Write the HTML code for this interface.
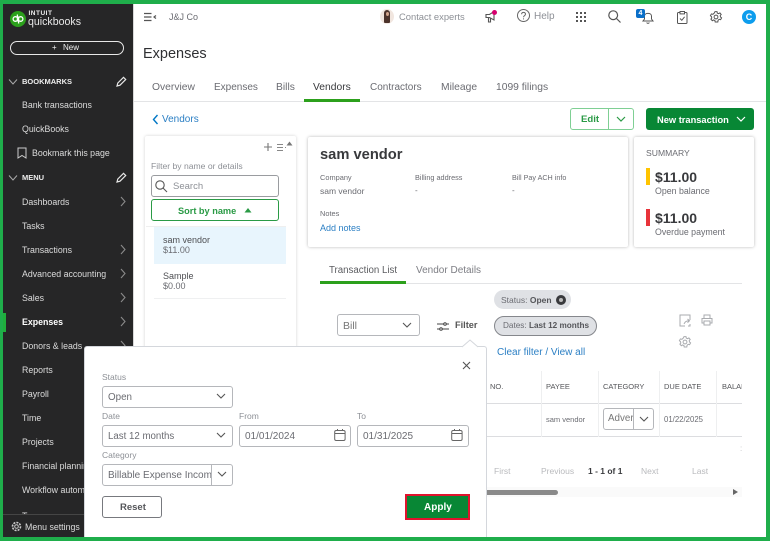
<!DOCTYPE html>
<html><head><meta charset="utf-8">
<style>
html,body{margin:0;padding:0;background:#fff}
#r{position:relative;width:770px;height:541px;overflow:hidden;background:#fff;font-family:"Liberation Sans",sans-serif;color:#6b6c72;filter:blur(.3px)}
#r *{box-sizing:border-box}
.t{position:absolute;white-space:nowrap;line-height:14px;font-size:9px}
.b{position:absolute}
.s{color:#dcdcdc;font-size:8.8px;left:22px}
.g{color:#8d9096}
.f{position:absolute;border:1px solid #b5b7bb;border-radius:3px;background:#fff}
svg{position:absolute;overflow:visible}
</style></head><body><div id="r">

<!-- sidebar -->
<div class="b" style="left:3px;top:3px;width:130px;height:534px;background:#262627"></div>
<div class="b" style="left:133px;top:3px;width:1px;height:534px;background:#d8d8d8"></div>
<div class="b" style="left:3px;top:313px;width:3px;height:19px;background:#1fae3c"></div>
<div class="b" style="left:3px;top:514px;width:130px;height:1px;background:#454545"></div>

<div class="b" style="left:10px;top:11px;width:16px;height:16px;border-radius:50%;background:#2ca01c"></div>
<svg style="left:10px;top:11px" width="16" height="16" fill="none" stroke="#fff" stroke-width="1.3"><circle cx="5.4" cy="8" r="2.3"/><circle cx="10.6" cy="8" r="2.3"/><path d="M7.4 3.5V10.5M8.6 5.5V12.5"/></svg>
<div class="t" style="left:28.5px;top:6.5px;color:#f0f0f0;font-size:6.5px;font-weight:bold;letter-spacing:.5px">INTUIT</div>
<div class="t" style="left:28px;top:15px;color:#e8e8e8;font-size:10.6px">quickbooks</div>

<div class="b" style="left:10px;top:41px;width:114px;height:14px;border:1.5px solid #e8e8e8;border-radius:8px"></div>
<div class="t" style="left:52px;top:41px;color:#eee;font-size:8px">+</div>
<div class="t" style="left:63px;top:41px;color:#eee;font-size:8px">New</div>

<svg style="left:8px;top:78px" width="10" height="8" fill="none" stroke="#aaa" stroke-width="1"><path d="M1 1.5L5 6L9 1.5"/></svg>
<div class="t" style="left:22px;top:75px;color:#eee;font-size:7.5px;font-weight:bold">BOOKMARKS</div>
<svg style="left:115px;top:76px" width="12" height="12" fill="none" stroke="#e8e8e8" stroke-width="1.2"><path d="M2 10L2.8 7L8.5 1.3L10.7 3.5L5 9.2Z"/></svg>
<div class="t s" style="top:98px">Bank transactions</div>
<div class="t s" style="top:122px">QuickBooks</div>
<svg style="left:17px;top:147px" width="10" height="12" fill="none" stroke="#ccc" stroke-width="1"><path d="M1 1H9V11L5 8.5L1 11Z"/></svg>
<div class="t s" style="left:32px;top:146px">Bookmark this page</div>

<svg style="left:8px;top:174px" width="10" height="8" fill="none" stroke="#aaa" stroke-width="1"><path d="M1 1.5L5 6L9 1.5"/></svg>
<div class="t" style="left:22px;top:171px;color:#eee;font-size:7.5px;font-weight:bold">MENU</div>
<svg style="left:115px;top:172px" width="12" height="12" fill="none" stroke="#e8e8e8" stroke-width="1.2"><path d="M2 10L2.8 7L8.5 1.3L10.7 3.5L5 9.2Z"/></svg>

<div class="t s" style="top:195px">Dashboards</div>
<div class="t s" style="top:219px">Tasks</div>
<div class="t s" style="top:243px">Transactions</div>
<div class="t s" style="top:267px">Advanced accounting</div>
<div class="t s" style="top:291px">Sales</div>
<div class="t s" style="top:315px;font-weight:bold;color:#fff">Expenses</div>
<div class="t s" style="top:339px">Donors &amp; leads</div>
<div class="t s" style="top:363px">Reports</div>
<div class="t s" style="top:387px">Payroll</div>
<div class="t s" style="top:411px">Time</div>
<div class="t s" style="top:435px">Projects</div>
<div class="t s" style="top:459px">Financial planning</div>
<div class="t s" style="top:483px">Workflow automation</div>
<div class="b" style="left:22px;top:509px;width:20px;height:5px;overflow:hidden"><div class="t" style="left:0;top:0;color:#dcdcdc;font-size:8.8px">Taxes</div></div>
<svg style="left:120px;top:196px" width="6" height="150" fill="none" stroke="#8a8a8a" stroke-width="1.1"><path d="M1 1L5 5.5L1 10M1 49L5 53.5L1 58M1 73L5 77.5L1 82M1 97L5 101.5L1 106M1 121L5 125.5L1 130M1 145L5 149.5L1 154"/></svg>

<svg style="left:11px;top:521px" width="11" height="11" fill="none" stroke="#ccc" stroke-width="1"><circle cx="5.5" cy="5.5" r="1.8"/><circle cx="5.5" cy="5.5" r="4" stroke-dasharray="2 1.1" stroke-width="1.6"/></svg>
<div class="t s" style="left:25px;top:520px;color:#ddd">Menu settings</div>

<!-- top bar -->
<svg style="left:144px;top:12px" width="13" height="10" fill="none" stroke="#555" stroke-width="1.2"><path d="M0 1.5H7.5M0 5H7.5M0 8.5H7.5"/><path d="M12 3.5L10 5L12 6.5" stroke-width="1.2"/></svg>
<div class="t" style="left:169px;top:10px;font-size:9px;color:#6b6c72">J&amp;J Co</div>

<div class="b" style="left:380px;top:9px;width:14px;height:15px;border-radius:50%;background:#f1e6df"></div>
<div class="b" style="left:384px;top:10px;width:6px;height:13px;border-radius:3px 3px 1px 1px;background:#4c332b"></div>
<div class="b" style="left:385.5px;top:12px;width:3px;height:4px;border-radius:50%;background:#d3a58d"></div>
<div class="t" style="left:399px;top:10px;font-size:9.4px;color:#8d9096">Contact experts</div>

<svg style="left:485px;top:10px" width="14" height="14" fill="none" stroke="#555" stroke-width="1.1"><path d="M1 4.5H4.5L9 1.5V10L4.5 7.5H1Z"/><path d="M3.5 8V12H5.5V8.5"/></svg>
<div class="b" style="left:492px;top:10px;width:5px;height:5px;border-radius:50%;background:#d6006e"></div>

<svg style="left:517px;top:9px" width="14" height="14" fill="none" stroke="#666" stroke-width="1"><circle cx="6.5" cy="6.5" r="6"/><path d="M4.6 5.2C4.6 2.8 8.5 2.8 8.5 5.1C8.5 6.6 6.5 6.6 6.5 8.2"/><path d="M6.5 9.4V10.4"/></svg>
<div class="t" style="left:534px;top:9.5px;font-size:10px;color:#8d9096">Help</div>

<svg style="left:576px;top:12px" width="10" height="10" fill="#555"><rect x="0" y="0" width="2" height="2"/><rect x="4" y="0" width="2" height="2"/><rect x="8" y="0" width="2" height="2"/><rect x="0" y="4" width="2" height="2"/><rect x="4" y="4" width="2" height="2"/><rect x="8" y="4" width="2" height="2"/><rect x="0" y="8" width="2" height="2"/><rect x="4" y="8" width="2" height="2"/><rect x="8" y="8" width="2" height="2"/></svg>

<svg style="left:608px;top:10px" width="14" height="14" fill="none" stroke="#555" stroke-width="1.2"><circle cx="5.2" cy="5.2" r="4.4"/><path d="M8.5 8.5L12.5 12.5"/></svg>

<svg style="left:642px;top:11px" width="12" height="13" fill="none" stroke="#555" stroke-width="1"><path d="M1 10H11L9.5 8V5C9.5 1.5 2.5 1.5 2.5 5V8Z"/><path d="M4.7 11.5C5 12.6 7 12.6 7.3 11.5"/></svg>
<div class="b" style="left:636px;top:9px;width:9px;height:9px;border-radius:2px;background:#0a6fc9;color:#fff;font-size:7px;line-height:9px;text-align:center;font-weight:bold">4</div>

<svg style="left:677px;top:11px" width="11" height="13" fill="none" stroke="#555" stroke-width="1"><rect x=".5" y="1.5" width="9.5" height="11" rx="1"/><rect x="3" y=".5" width="4.5" height="2.4" fill="#fff"/><path d="M3 7.5L4.8 9.3L7.6 5.8"/></svg>

<svg style="left:710px;top:11px" width="12" height="12" fill="none" stroke="#555" stroke-width="1"><circle cx="6" cy="6" r="1.9"/><path d="M5 .6H7L7.3 2.1L8.6 2.7L9.9 1.9L11.2 3.5L10.2 4.6L10.5 6L11.6 6.9L10.6 8.7L9.2 8.3L8.1 9.3L7.8 11H5.2L4.9 9.5L3.6 8.9L2.3 9.7L.9 8.1L1.8 7L1.5 5.6L.4 4.7L1.4 2.9L2.9 3.3L4.1 2.3Z"/></svg>

<div class="b" style="left:742px;top:10px;width:14px;height:14px;border-radius:50%;background:#0d9ded;color:#fff;font-size:9px;font-weight:bold;line-height:14px;text-align:center">C</div>

<!-- heading & tabs -->
<div class="t" style="left:143px;top:45px;font-size:14.5px;line-height:18px;color:#2f3033">Expenses</div>
<div class="t" style="left:152px;top:80.5px;font-size:10.3px;color:#6b6c72">Overview</div>
<div class="t" style="left:214px;top:80.5px;font-size:10px;color:#6b6c72">Expenses</div>
<div class="t" style="left:276px;top:80.5px;font-size:10.3px;color:#6b6c72">Bills</div>
<div class="t" style="left:313px;top:80.5px;font-size:10.3px;color:#393a3d">Vendors</div>
<div class="t" style="left:370px;top:80.5px;font-size:10px;color:#6b6c72">Contractors</div>
<div class="t" style="left:441px;top:80.5px;font-size:10.3px;color:#6b6c72">Mileage</div>
<div class="t" style="left:496px;top:80.5px;font-size:10.3px;color:#6b6c72">1099 filings</div>
<div class="b" style="left:134px;top:101px;width:632px;height:1px;background:#e3e4e6"></div>
<div class="b" style="left:304px;top:99px;width:56px;height:3px;background:#2ca01c"></div>

<svg style="left:152px;top:114px" width="7" height="11" fill="none" stroke="#0077c5" stroke-width="1.4"><path d="M5.5 1L1.5 5.5L5.5 10"/></svg>
<div class="t" style="left:162px;top:112.5px;font-size:10px;color:#2b7fc4">Vendors</div>

<div class="b" style="left:570px;top:108px;width:64px;height:22px;border:1px solid #7fcf94;border-radius:3px"></div>
<div class="b" style="left:608px;top:108px;width:1px;height:22px;background:#7fcf94"></div>
<div class="t" style="left:581px;top:113px;font-size:9.6px;font-weight:bold;color:#2a9a45">Edit</div>
<svg style="left:616px;top:116px" width="10" height="7" fill="none" stroke="#2a9a45" stroke-width="1.2"><path d="M1 1L5 5L9 1"/></svg>
<div class="b" style="left:646px;top:108px;width:108px;height:22px;border-radius:3px;background:#088735"></div>
<div class="t" style="left:657px;top:113px;font-size:9.3px;font-weight:bold;color:#fff">New transaction</div>
<svg style="left:736px;top:116px" width="10" height="7" fill="none" stroke="#fff" stroke-width="1.2"><path d="M1 1L5 5L9 1"/></svg>

<!-- vendor list card -->
<div class="b" style="left:145px;top:136px;width:151px;height:230px;background:#fff;border-radius:2px;box-shadow:0 0 3px rgba(0,0,0,.18)"></div>
<div class="b" style="left:146px;top:226px;width:140px;height:1px;background:#efefef"></div>
<svg style="left:264px;top:143px" width="8" height="8" fill="none" stroke="#777" stroke-width="1.1"><path d="M4 0V8M0 4H8"/></svg>
<svg style="left:277px;top:144px" width="9" height="7" fill="none" stroke="#888" stroke-width="1"><path d="M0 .5H6M0 3.5H6M0 6.5H6M8 3.5H9"/></svg>
<svg style="left:286px;top:141px" width="7" height="5" fill="#777"><path d="M3.5 .5L6.5 4.5H.5Z"/></svg>
<div class="t" style="left:151px;top:159px;font-size:8.6px;color:#8d9096">Filter by name or details</div>
<div class="f" style="left:151px;top:175px;width:128px;height:22px;border-color:#9a9ca0"></div>
<svg style="left:155px;top:180px" width="13" height="13" fill="none" stroke="#555" stroke-width="1.1"><circle cx="5" cy="5" r="4.2"/><path d="M8 8L12 12"/></svg>
<div class="t" style="left:173px;top:179.5px;font-size:9.5px;color:#8d9096">Search</div>
<div class="b" style="left:151px;top:199px;width:128px;height:22px;border:1.5px solid #2a9a45;border-radius:3px"></div>
<div class="t" style="left:178px;top:203.5px;font-size:9.2px;font-weight:bold;color:#2a9a45">Sort by name</div>
<svg style="left:244px;top:208px" width="8" height="5" fill="#2a9a45"><path d="M4 0L7.5 4.5H.5Z"/></svg>

<div class="b" style="left:154px;top:227px;width:132px;height:37px;background:#e8f5fd"></div>
<div class="t" style="left:163px;top:233px;font-size:9px;color:#4d4e52">sam vendor</div>
<div class="t" style="left:163px;top:243px;font-size:9px;color:#6b6c72">$11.00</div>
<div class="b" style="left:154px;top:298px;width:132px;height:1px;background:#eff0f1"></div>
<div class="t" style="left:163px;top:269px;font-size:9px;color:#4d4e52">Sample</div>
<div class="t" style="left:163px;top:279px;font-size:9px;color:#6b6c72">$0.00</div>

<!-- vendor detail card -->
<div class="b" style="left:308px;top:137px;width:320px;height:110px;background:#fff;border-radius:2px;box-shadow:0 0 3px rgba(0,0,0,.28)"></div>
<div class="t" style="left:320px;top:145.5px;font-size:14.7px;line-height:18px;font-weight:bold;color:#393a3d">sam vendor</div>
<div class="t" style="left:320px;top:171px;font-size:7.4px;color:#6b6c72">Company</div>
<div class="t" style="left:320px;top:183.5px;font-size:8.5px;color:#6b6c72">sam vendor</div>
<div class="t" style="left:415px;top:171px;font-size:7.3px;color:#6b6c72">Billing address</div>
<div class="t" style="left:415px;top:184px;font-size:8px;color:#6b6c72">-</div>
<div class="t" style="left:512px;top:171px;font-size:7.2px;color:#6b6c72">Bill Pay ACH info</div>
<div class="t" style="left:512px;top:184px;font-size:8px;color:#6b6c72">-</div>
<div class="t" style="left:320px;top:207px;font-size:7.4px;color:#6b6c72">Notes</div>
<div class="t" style="left:320px;top:220.5px;font-size:9px;color:#2b7fc4">Add notes</div>

<!-- summary card -->
<div class="b" style="left:634px;top:137px;width:120px;height:110px;background:#fff;border-radius:2px;box-shadow:0 0 3px rgba(0,0,0,.28)"></div>
<div class="t" style="left:646px;top:146px;font-size:8.6px;color:#6b6c72">SUMMARY</div>
<div class="b" style="left:646px;top:168px;width:4px;height:17px;background:#ffc400"></div>
<div class="t" style="left:655px;top:169.5px;font-size:14px;font-weight:bold;color:#393a3d">$11.00</div>
<div class="t" style="left:655px;top:184px;font-size:8.8px;color:#6b6c72">Open balance</div>
<div class="b" style="left:646px;top:209px;width:4px;height:17px;background:#e8333a"></div>
<div class="t" style="left:655px;top:210.5px;font-size:14px;font-weight:bold;color:#393a3d">$11.00</div>
<div class="t" style="left:655px;top:225px;font-size:8.8px;color:#6b6c72">Overdue payment</div>

<!-- transaction tabs -->
<div class="t" style="left:329px;top:264px;font-size:9.7px;color:#5c5d61">Transaction List</div>
<div class="t" style="left:416px;top:264px;font-size:10px;color:#7d7e84">Vendor Details</div>
<div class="b" style="left:320px;top:283px;width:422px;height:1px;background:#e3e4e6"></div>
<div class="b" style="left:320px;top:281px;width:86px;height:2.5px;background:#2ca01c"></div>

<div class="f" style="left:337px;top:314px;width:83px;height:22px"></div>
<div class="t" style="left:343px;top:318.5px;font-size:10.5px;color:#777">Bill</div>
<svg style="left:402px;top:322px" width="10" height="7" fill="none" stroke="#555" stroke-width="1.1"><path d="M1 1L5 5L9 1"/></svg>
<svg style="left:437px;top:321px" width="12" height="11" fill="none" stroke="#444" stroke-width="1"><path d="M0 3H12M0 8H12"/><circle cx="8" cy="3" r="1.3" fill="#fff"/><circle cx="4" cy="8" r="1.3" fill="#fff"/></svg>
<div class="t" style="left:455px;top:318px;font-size:9.2px;font-weight:bold;color:#555">Filter</div>

<div class="b" style="left:494px;top:290px;width:77px;height:19px;border-radius:10px;background:#dfe1e5"></div>
<div class="t" style="left:501px;top:293px;font-size:8.5px;color:#6b6c72">Status: <b style="color:#55565a">Open</b></div>
<div class="b" style="left:556px;top:295px;width:10px;height:10px;border-radius:50%;background:#393a3d"></div>
<div class="b" style="left:559px;top:298px;width:4px;height:4px;border-radius:50%;background:#bbb"></div>
<div class="b" style="left:494px;top:316px;width:103px;height:20px;border-radius:10px;background:#dfe1e5;border:1px solid #85878c"></div>
<div class="t" style="left:503px;top:319px;font-size:8.2px;color:#6b6c72">Dates: <b style="color:#55565a">Last 12 months</b></div>

<svg style="left:679px;top:314px" width="12" height="13" fill="none" stroke="#a9abaf" stroke-width="1"><path d="M11 6V1H1V12H6"/><path d="M5 10C6 7.5 7.5 6.8 10 6.8M8.5 5L10.5 6.8L8.5 8.6"/><path d="M9 12H11V10"/></svg>
<svg style="left:701px;top:314px" width="12" height="12" fill="none" stroke="#a9abaf" stroke-width="1"><path d="M3 4V1H9V4M3 9H1V4.5H11V9H9"/><rect x="3" y="7" width="6" height="4"/></svg>
<svg style="left:679px;top:336px" width="12" height="12" fill="none" stroke="#a9abaf" stroke-width="1"><circle cx="6" cy="6" r="1.9"/><path d="M5 .6H7L7.3 2.1L8.6 2.7L9.9 1.9L11.2 3.5L10.2 4.6L10.5 6L11.6 6.9L10.6 8.7L9.2 8.3L8.1 9.3L7.8 11H5.2L4.9 9.5L3.6 8.9L2.3 9.7L.9 8.1L1.8 7L1.5 5.6L.4 4.7L1.4 2.9L2.9 3.3L4.1 2.3Z"/></svg>

<div class="t" style="left:497px;top:345.5px;font-size:10px;color:#2b7fc4">Clear filter / View all</div>

<!-- table -->
<div class="b" style="left:486px;top:403px;width:256px;height:1px;background:#dcdde0"></div>
<div class="b" style="left:486px;top:436px;width:256px;height:1px;background:#dcdde0"></div>
<div class="b" style="left:541px;top:371px;width:1px;height:66px;background:#eeeff0"></div>
<div class="b" style="left:598px;top:371px;width:1px;height:66px;background:#eeeff0"></div>
<div class="b" style="left:659px;top:371px;width:1px;height:66px;background:#eeeff0"></div>
<div class="b" style="left:716px;top:371px;width:1px;height:66px;background:#eeeff0"></div>
<div class="t" style="left:490px;top:380px;font-size:7.5px;color:#55565a">NO.</div>
<div class="t" style="left:546px;top:380px;font-size:7.5px;color:#55565a">PAYEE</div>
<div class="t" style="left:603px;top:380px;font-size:7.5px;color:#55565a">CATEGORY</div>
<div class="t" style="left:664px;top:380px;font-size:7.5px;color:#55565a">DUE DATE</div>
<div class="b" style="left:722px;top:380px;width:20px;height:14px;overflow:hidden"><div class="t" style="left:0;top:0;font-size:7.5px;color:#55565a">BALANCE</div></div>
<div class="t" style="left:546px;top:413px;font-size:7.5px;color:#6b6c72">sam vendor</div>
<div class="f" style="left:603px;top:408px;width:51px;height:22px"></div>
<div class="b" style="left:633px;top:408px;width:1px;height:22px;background:#b5b7bb"></div>
<div class="b" style="left:608px;top:412px;width:25px;height:14px;overflow:hidden"><div class="t" style="left:0;top:0;font-size:9.8px;color:#777">Advertising</div></div>
<svg style="left:639px;top:416px" width="10" height="7" fill="none" stroke="#555" stroke-width="1.1"><path d="M1 1L5 5L9 1"/></svg>
<div class="t" style="left:664px;top:413px;font-size:7.8px;color:#6b6c72">01/22/2025</div>
<div class="t" style="left:740px;top:442px;font-size:8px;color:#c4c5c8">:</div>

<div class="t" style="left:494px;top:464px;font-size:8.5px;color:#b9babd">First</div>
<div class="t" style="left:541px;top:464px;font-size:8.5px;color:#b9babd">Previous</div>
<div class="t" style="left:588px;top:464px;font-size:8.5px;font-weight:bold;color:#393a3d">1 - 1 of 1</div>
<div class="t" style="left:641px;top:464px;font-size:8.5px;color:#b9babd">Next</div>
<div class="t" style="left:692px;top:464px;font-size:8.5px;color:#b9babd">Last</div>
<div class="b" style="left:486px;top:487px;width:256px;height:10px;background:#fafafa"></div>
<div class="b" style="left:486px;top:489.5px;width:72px;height:5px;border-radius:0 3px 3px 0;background:#8a8a8a"></div>
<svg style="left:733px;top:489px" width="5" height="6" fill="#666"><path d="M0 0L5 3L0 6Z"/></svg>

<!-- filter popup -->
<div class="b" style="left:84px;top:346px;width:403px;height:192px;background:#fff;border:1px solid #d4d7dc;border-bottom:0;border-radius:3px 3px 0 0"></div>
<svg style="left:462px;top:339px" width="16" height="8"><path d="M0 8L8 1L16 8" fill="#fff" stroke="#d4d7dc"/><path d="M1 8.5H15" stroke="#fff" stroke-width="1.5"/></svg>
<svg style="left:462px;top:361px" width="9" height="9" fill="none" stroke="#555" stroke-width="1.1"><path d="M1 1L8 8M8 1L1 8"/></svg>

<div class="t" style="left:102px;top:370px;font-size:8.5px;color:#8d9096">Status</div>
<div class="f" style="left:102px;top:386px;width:131px;height:22px"></div>
<div class="t" style="left:108px;top:390.5px;font-size:9.8px;color:#6b6c72">Open</div>
<svg style="left:216px;top:393px" width="10" height="7" fill="none" stroke="#555" stroke-width="1.1"><path d="M1 1L5 5L9 1"/></svg>

<div class="t" style="left:102px;top:409px;font-size:8.5px;color:#8d9096">Date</div>
<div class="f" style="left:102px;top:425px;width:131px;height:22px"></div>
<div class="t" style="left:108px;top:429.5px;font-size:9.7px;color:#6b6c72">Last 12 months</div>
<svg style="left:216px;top:432px" width="10" height="7" fill="none" stroke="#555" stroke-width="1.1"><path d="M1 1L5 5L9 1"/></svg>

<div class="t" style="left:239px;top:409px;font-size:8.5px;color:#8d9096">From</div>
<div class="f" style="left:239px;top:425px;width:112px;height:22px"></div>
<div class="t" style="left:245px;top:429.5px;font-size:10px;color:#6b6c72">01/01/2024</div>
<svg style="left:334px;top:429px" width="12" height="13" fill="none" stroke="#666" stroke-width="1"><rect x=".7" y="1.5" width="10.4" height="10" rx="1.5"/><path d="M.7 4.5H11.1M3.5 0V2M8.5 0V2"/></svg>

<div class="t" style="left:357px;top:409px;font-size:8.5px;color:#8d9096">To</div>
<div class="f" style="left:357px;top:425px;width:112px;height:22px"></div>
<div class="t" style="left:363px;top:429.5px;font-size:10px;color:#6b6c72">01/31/2025</div>
<svg style="left:451px;top:429px" width="12" height="13" fill="none" stroke="#666" stroke-width="1"><rect x=".7" y="1.5" width="10.4" height="10" rx="1.5"/><path d="M.7 4.5H11.1M3.5 0V2M8.5 0V2"/></svg>

<div class="t" style="left:102px;top:448px;font-size:8.5px;color:#8d9096">Category</div>
<div class="f" style="left:102px;top:464px;width:131px;height:22px"></div>
<div class="b" style="left:211px;top:464px;width:1px;height:22px;background:#b5b7bb"></div>
<div class="b" style="left:108px;top:468.5px;width:103px;height:14px;overflow:hidden"><div class="t" style="left:0;top:0;font-size:10px;color:#6b6c72">Billable Expense Income</div></div>
<svg style="left:217px;top:471px" width="10" height="7" fill="none" stroke="#555" stroke-width="1.1"><path d="M1 1L5 5L9 1"/></svg>

<div class="b" style="left:102px;top:496px;width:60px;height:22px;border:1px solid #77797e;border-radius:3px"></div>
<div class="t" style="left:120px;top:501px;font-size:9.5px;font-weight:bold;color:#55565a">Reset</div>
<div class="b" style="left:405px;top:494px;width:65px;height:26px;background:#088735;border:2.5px solid #e0132d"></div>
<div class="t" style="left:424px;top:501px;font-size:10px;font-weight:bold;color:#fff">Apply</div>

<!-- green frame -->
<div class="b" style="left:0;top:0;width:770px;height:3.5px;background:#1fae4b"></div>
<div class="b" style="left:0;top:0;width:3px;height:541px;background:#1fae4b"></div>
<div class="b" style="left:766px;top:0;width:4px;height:541px;background:#1fae4b"></div>
<div class="b" style="left:0;top:537px;width:770px;height:4px;background:#1fae4b"></div>
</div></body></html>
